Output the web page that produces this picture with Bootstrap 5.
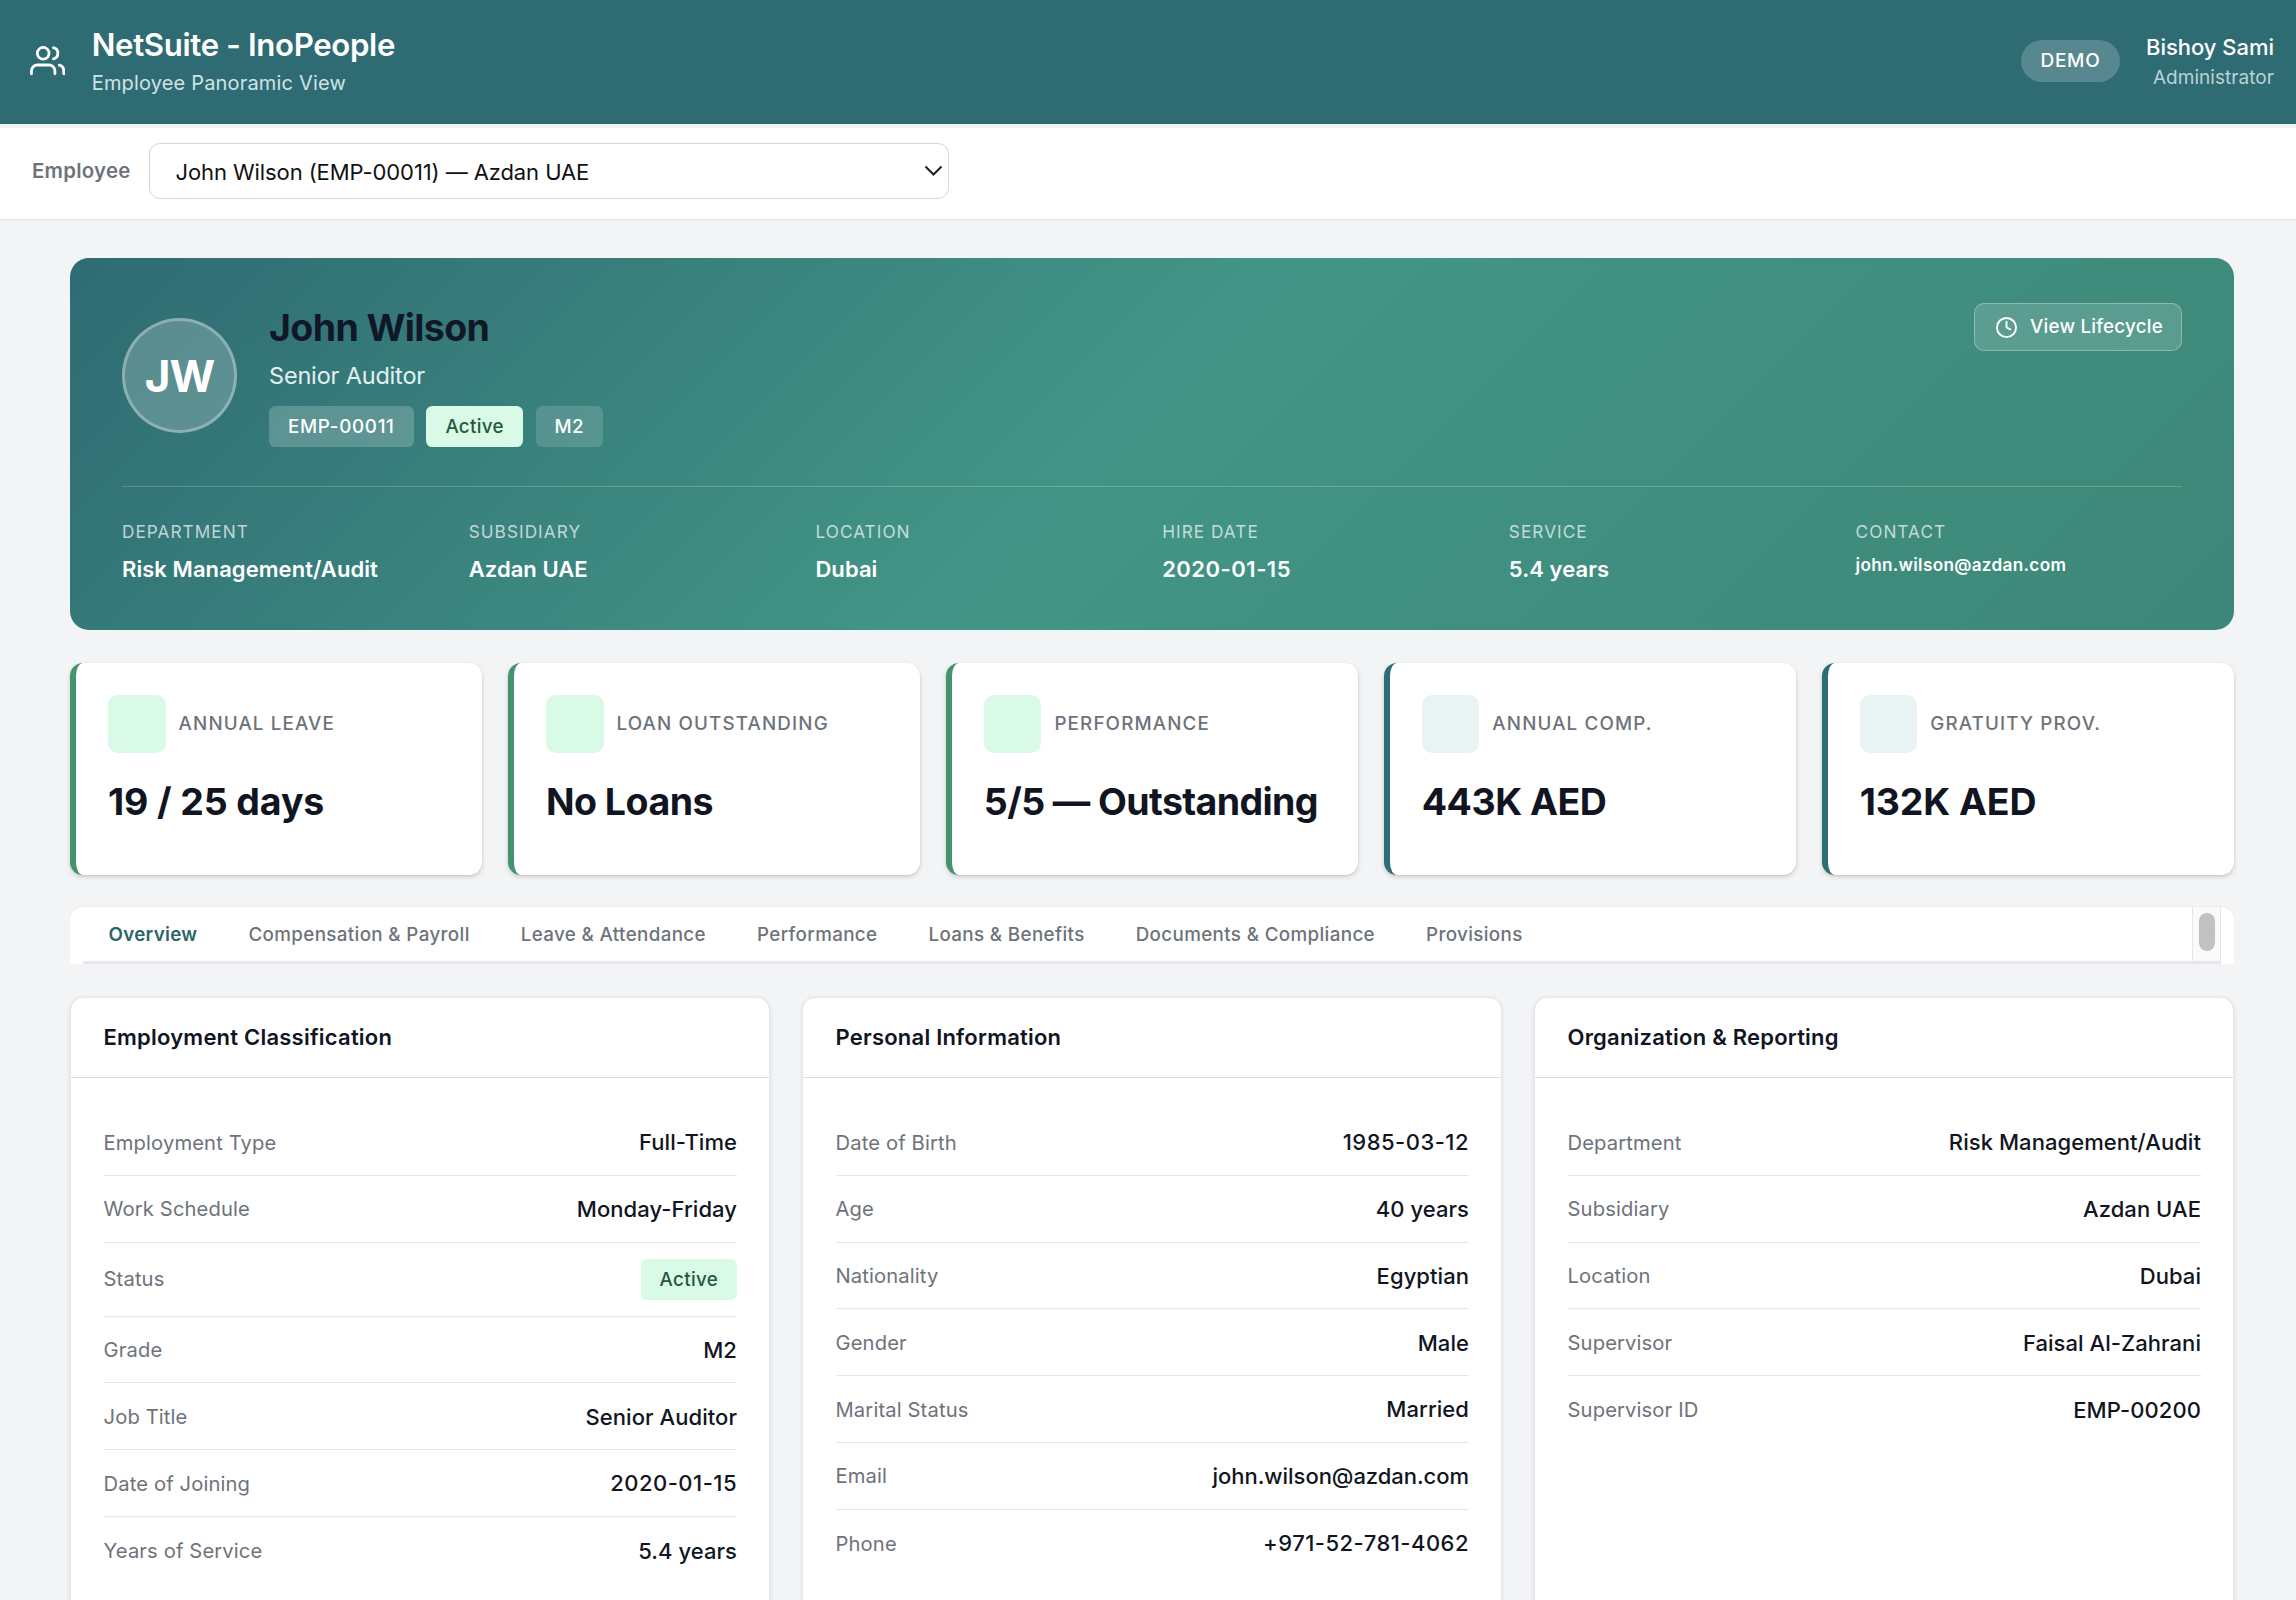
<!DOCTYPE html>
<html lang="en">
<head>
<meta charset="utf-8">
<meta name="viewport" content="width=device-width, initial-scale=1">
<title>NetSuite - InoPeople</title>
<link href="https://cdn.jsdelivr.net/npm/bootstrap@5.3.0/dist/css/bootstrap.min.css" rel="stylesheet">
<style>
:root{--teal:#2f6b73;--ink:#111522;--muted:#6e737b}
html,body{height:1600px;overflow:hidden}
body{font-family:Inter,"Liberation Sans",sans-serif;background:#f3f4f6;color:var(--ink)}
.topbar{height:124px;background:var(--teal);padding:0 22px 2px 30px}
.topbar .users-ico{width:35.2px;height:35.2px;margin-top:-1px;margin-right:26.5px}
.brand{font-size:31.2px;font-weight:580;letter-spacing:-.34px;line-height:44px}
.brand-sub{font-size:20px;letter-spacing:.17px;line-height:32px;color:#cfe3e6}
.demo-pill{width:99px;height:42px;line-height:42px;border-radius:21px;padding:0;background:rgba(255,255,255,.2);font-size:19px;font-weight:480;letter-spacing:.75px;margin-right:26px}
.user-name{font-size:22px;font-weight:480;letter-spacing:-.02px;line-height:32px}
.user-role{font-size:19px;line-height:29px;letter-spacing:.05px;color:#b9d3d8}
.pickbar{height:96px;border-bottom:1.5px solid #e3e5e8;box-shadow:inset 0 4px 0 #edf3ef;padding:19px 0 0 32px}
.pick-label{font-size:20.4px;font-weight:570;letter-spacing:.26px;color:var(--muted);width:117px;line-height:55px;padding-bottom:1px}
.pick-wrap{width:800px}
.pick-wrap .form-select{height:56px;border:1.5px solid #d3d6da;border-radius:11px;background-image:none;padding:2px 26px 0 25.5px;font-size:22px;letter-spacing:-.09px;color:#111}
.pick-wrap svg{position:absolute;right:6px;top:22px;width:19px;height:12px}
.page{padding:38px 62px 0 70px}
.hero{height:372px;border-radius:19px;background:linear-gradient(135deg,#2f6b73 0%,#429586 48%,#3d8778 100%);padding:45px 52px 0;margin-bottom:32.5px}
.hero-main{height:144px}
.avatar{width:115px;height:115px;border:3px solid rgba(255,255,255,.3);background:rgba(255,255,255,.2);font-size:44px;font-weight:700;letter-spacing:-1px;margin-right:32px;padding-top:1px}
.person{font-size:37.5px;font-weight:690;letter-spacing:-.62px;line-height:50px;color:#101828;margin-bottom:4px}
.person-role{font-size:23.5px;letter-spacing:-.18px;line-height:37px;color:#e4f0f0;margin-bottom:12px}
.tagx{height:41px;line-height:41px;border-radius:6.4px;font-size:18.8px;font-weight:470;padding:0 19px;letter-spacing:.3px}
.tag-id{background:rgba(255,255,255,.2);letter-spacing:.68px}
.tag-ok{background:#d9fae6;color:#27573f}
.tag-lv{background:rgba(255,255,255,.15)}
.life-btn{height:48px;width:208px;padding:0 0 0 20px;border:1.5px solid rgba(255,255,255,.3);background:rgba(255,255,255,.15);border-radius:10px;font-size:18.8px;font-weight:470;letter-spacing:.22px;color:#fff}
.life-btn svg{width:23px;height:23px;margin-right:12px}
.hero-facts{margin-top:39px;border-top:1.5px solid rgba(255,255,255,.2);padding-top:31px;display:grid;grid-template-columns:repeat(6,1fr);column-gap:20.3px}
.fact-k{font-size:17.2px;letter-spacing:1.05px;line-height:28px;color:rgba(255,255,255,.7);margin-bottom:6px}
.fact-v{font-size:22px;font-weight:590;line-height:34px;letter-spacing:.06px;color:#fff}
.fact-v.digits{letter-spacing:.5px}
.fact-v.mail{font-size:17.2px;line-height:26px;letter-spacing:.3px}
.stats{display:grid;grid-template-columns:repeat(5,1fr);gap:25.6px;margin-bottom:32px}
.stat{height:212px;background:#fff;border-left:6.4px solid #43946c;border-radius:13px;box-shadow:0 2px 5px rgba(0,0,0,.14),0 1px 2px rgba(0,0,0,.08);padding:32.5px 0 0 32px}
.stat.alt{border-color:#2c6e72}
.stat-ico{width:57.6px;height:57.6px;border-radius:10px;background:#d9fae6;margin-right:13px}
.alt .stat-ico{background:#e8f4f3}
.stat-k{font-size:18.8px;font-weight:460;letter-spacing:1.14px;color:var(--muted)}
.stat-v{font-size:37.5px;font-weight:690;letter-spacing:-.5px;line-height:54px;margin-top:22px;white-space:nowrap}
.stat-v.wide{letter-spacing:-.6px}
.stat-v.loose{letter-spacing:-.12px}
.tabstrip{height:57.5px;background:#fff;border-radius:13px 13px 0 0;padding:0 13px;margin-bottom:32.5px;box-shadow:0 -1px 1px rgba(0,0,0,.03)}
.tabstrip .inner{border-bottom:3px solid #e5e7ea}
.tabstrip .nav-link{padding:0 25.5px;font-size:18.8px;font-weight:480;letter-spacing:.36px;line-height:55px;color:var(--muted)}
.tabstrip .nav-link.active{color:#2c6469;font-weight:590;letter-spacing:.3px}
.scroll-track{width:29px;background:#fafafa;border:solid #e6e6e6;border-width:0 1.5px;padding-top:6px}
.scroll-thumb{width:16px;height:38px;border-radius:8px;background:#c1c1c1}
.panels{display:grid;grid-template-columns:repeat(3,1fr);gap:32px}
.panel{height:640px;background:#fff;border:1.5px solid #e5e7ea;border-radius:13px;box-shadow:0 1px 4px rgba(0,0,0,.1)}
.panel-h{height:80.5px;line-height:79px;border-bottom:1.5px solid #d9dcdf;padding:0 32.5px;font-size:22px;font-weight:590;letter-spacing:.22px}
.panel-b{padding:31px 32px 0 32.5px}
.kv{height:66.8px;border-bottom:1.5px solid #e4e6e8;padding-top:1.5px}
.kv:last-child{border-bottom:0}
.kv.tall{height:74px;padding-top:0}
.kv dt{font-size:20.2px;font-weight:400;letter-spacing:.13px;color:var(--muted)}
.kv dd{font-size:22px;font-weight:470;letter-spacing:.06px;margin:0}
.kv dd.digits{letter-spacing:.48px}
.kv dd.mail{letter-spacing:-.04px}
.kv dd.tagx{font-size:18.8px;letter-spacing:.3px}
</style>
</head>
<body>
<header class="topbar d-flex align-items-center text-white">
  <svg class="users-ico flex-shrink-0" viewBox="0 0 24 24" fill="none" stroke="#fff" stroke-width="1.9" stroke-linecap="round" stroke-linejoin="round"><path d="M17 21v-2a4 4 0 0 0-4-4H5a4 4 0 0 0-4 4v2"/><circle cx="9" cy="7" r="4"/><path d="M23 21v-2a4 4 0 0 0-3-3.87M16 3.13a4 4 0 0 1 0 7.75"/></svg>
  <div class="me-auto"><div class="brand">NetSuite - InoPeople</div><div class="brand-sub">Employee Panoramic View</div></div>
  <span class="badge demo-pill">DEMO</span>
  <div class="text-end"><div class="user-name">Bishoy Sami</div><div class="user-role">Administrator</div></div>
</header>
<section class="pickbar bg-white d-flex align-items-start">
  <label class="pick-label" for="emp">Employee</label>
  <div class="pick-wrap position-relative">
    <select class="form-select" id="emp"><option>John Wilson (EMP-00011) — Azdan UAE</option></select>
    <svg viewBox="0 0 19 12" fill="none" stroke="#222" stroke-width="2.1"><path d="M1.5 1.5 9.5 9.5 17.5 1.5"/></svg>
  </div>
</section>
<main class="page">
  <section class="hero text-white">
    <div class="hero-main d-flex">
      <div class="avatar rounded-circle d-flex align-items-center justify-content-center align-self-center">JW</div>
      <div class="me-auto">
        <h1 class="person mt-0">John Wilson</h1>
        <div class="person-role">Senior Auditor</div>
        <div class="d-flex" style="gap:12.8px"><span class="tagx tag-id">EMP-00011</span><span class="tagx tag-ok">Active</span><span class="tagx tag-lv">M2</span></div>
      </div>
      <button class="btn life-btn d-flex align-items-center"><svg viewBox="0 0 24 24" fill="none" stroke="#fff" stroke-width="2" stroke-linecap="round" stroke-linejoin="round"><circle cx="12" cy="12" r="10"/><path d="M12 6v6l4 2"/></svg>View Lifecycle</button>
    </div>
    <div class="hero-facts">
      <div><div class="fact-k">DEPARTMENT</div><div class="fact-v">Risk Management/Audit</div></div>
      <div><div class="fact-k">SUBSIDIARY</div><div class="fact-v">Azdan UAE</div></div>
      <div><div class="fact-k">LOCATION</div><div class="fact-v">Dubai</div></div>
      <div><div class="fact-k">HIRE DATE</div><div class="fact-v digits">2020-01-15</div></div>
      <div><div class="fact-k">SERVICE</div><div class="fact-v">5.4 years</div></div>
      <div><div class="fact-k">CONTACT</div><div class="fact-v mail">john.wilson@azdan.com</div></div>
    </div>
  </section>
  <section class="stats">
    <div class="stat"><div class="d-flex align-items-center"><span class="stat-ico"></span><span class="stat-k">ANNUAL LEAVE</span></div><div class="stat-v loose">19 / 25 days</div></div>
    <div class="stat"><div class="d-flex align-items-center"><span class="stat-ico"></span><span class="stat-k">LOAN OUTSTANDING</span></div><div class="stat-v">No Loans</div></div>
    <div class="stat"><div class="d-flex align-items-center"><span class="stat-ico"></span><span class="stat-k">PERFORMANCE</span></div><div class="stat-v wide">5/5 — Outstanding</div></div>
    <div class="stat alt"><div class="d-flex align-items-center"><span class="stat-ico"></span><span class="stat-k">ANNUAL COMP.</span></div><div class="stat-v">443K AED</div></div>
    <div class="stat alt"><div class="d-flex align-items-center"><span class="stat-ico"></span><span class="stat-k">GRATUITY PROV.</span></div><div class="stat-v loose">132K AED</div></div>
  </section>
  <div class="tabstrip">
    <div class="inner d-flex h-100">
      <nav class="nav flex-nowrap me-auto">
        <a class="nav-link active" href="#">Overview</a><a class="nav-link" href="#">Compensation &amp; Payroll</a><a class="nav-link" href="#">Leave &amp; Attendance</a><a class="nav-link" href="#">Performance</a><a class="nav-link" href="#">Loans &amp; Benefits</a><a class="nav-link" href="#">Documents &amp; Compliance</a><a class="nav-link" href="#">Provisions</a>
      </nav>
      <div class="scroll-track d-flex justify-content-center"><div class="scroll-thumb"></div></div>
    </div>
  </div>
  <section class="panels">
    <article class="panel">
      <h2 class="panel-h m-0">Employment Classification</h2>
      <div class="panel-b">
        <dl class="kv d-flex align-items-center justify-content-between m-0"><dt>Employment Type</dt><dd>Full-Time</dd></dl>
        <dl class="kv d-flex align-items-center justify-content-between m-0"><dt>Work Schedule</dt><dd>Monday-Friday</dd></dl>
        <dl class="kv tall d-flex align-items-center justify-content-between m-0"><dt>Status</dt><dd class="tagx tag-ok">Active</dd></dl>
        <dl class="kv d-flex align-items-center justify-content-between m-0"><dt>Grade</dt><dd>M2</dd></dl>
        <dl class="kv d-flex align-items-center justify-content-between m-0"><dt>Job Title</dt><dd>Senior Auditor</dd></dl>
        <dl class="kv d-flex align-items-center justify-content-between m-0"><dt>Date of Joining</dt><dd class="digits">2020-01-15</dd></dl>
        <dl class="kv d-flex align-items-center justify-content-between m-0"><dt>Years of Service</dt><dd>5.4 years</dd></dl>
      </div>
    </article>
    <article class="panel">
      <h2 class="panel-h m-0">Personal Information</h2>
      <div class="panel-b">
        <dl class="kv d-flex align-items-center justify-content-between m-0"><dt>Date of Birth</dt><dd class="digits">1985-03-12</dd></dl>
        <dl class="kv d-flex align-items-center justify-content-between m-0"><dt>Age</dt><dd>40 years</dd></dl>
        <dl class="kv d-flex align-items-center justify-content-between m-0"><dt>Nationality</dt><dd>Egyptian</dd></dl>
        <dl class="kv d-flex align-items-center justify-content-between m-0"><dt>Gender</dt><dd>Male</dd></dl>
        <dl class="kv d-flex align-items-center justify-content-between m-0"><dt>Marital Status</dt><dd>Married</dd></dl>
        <dl class="kv d-flex align-items-center justify-content-between m-0"><dt>Email</dt><dd class="mail">john.wilson@azdan.com</dd></dl>
        <dl class="kv d-flex align-items-center justify-content-between m-0"><dt>Phone</dt><dd class="digits">+971-52-781-4062</dd></dl>
      </div>
    </article>
    <article class="panel">
      <h2 class="panel-h m-0">Organization &amp; Reporting</h2>
      <div class="panel-b">
        <dl class="kv d-flex align-items-center justify-content-between m-0"><dt>Department</dt><dd>Risk Management/Audit</dd></dl>
        <dl class="kv d-flex align-items-center justify-content-between m-0"><dt>Subsidiary</dt><dd>Azdan UAE</dd></dl>
        <dl class="kv d-flex align-items-center justify-content-between m-0"><dt>Location</dt><dd>Dubai</dd></dl>
        <dl class="kv d-flex align-items-center justify-content-between m-0"><dt>Supervisor</dt><dd>Faisal Al-Zahrani</dd></dl>
        <dl class="kv d-flex align-items-center justify-content-between m-0"><dt>Supervisor ID</dt><dd>EMP-00200</dd></dl>
      </div>
    </article>
  </section>
</main>
<script src="https://cdn.jsdelivr.net/npm/bootstrap@5.3.0/dist/js/bootstrap.bundle.min.js"></script>
</body>
</html>
